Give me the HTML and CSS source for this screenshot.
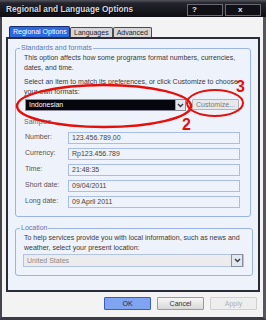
FILE: index.html
```html
<!DOCTYPE html>
<html lang="en">
<head>
    <meta charset="UTF-8">
    <meta name="viewport" content="width=device-width, initial-scale=1.0">
    <title>Regional and Language Options</title>
    <link rel="stylesheet" href="styles.css">
</head>
<body>

    <div class="window">
        <div class="titlebar">
            <span class="title">Regional and Language Options</span>
            <span class="tb-btn help">?</span>
            <span class="tb-btn close">x</span>
        </div>

        <div class="frame">
            <div class="tabs">
                <span class="tab active">Regional Options</span>
                <span class="tab">Languages</span>
                <span class="tab">Advanced</span>
            </div>

            <div class="panel">
                <fieldset class="group standards">
                    <legend>Standards and formats</legend>
                    <p>This option affects how some programs format numbers, currencies,<br>dates, and time.</p>
                    <p class="gap">Select an item to match its preferences, or click Customize to choose<br>your own formats:</p>

                    <div class="select-row">
                        <div class="combo dark">
                            <span class="combo-text">Indonesian</span>
                            <span class="combo-arrow">
                                <svg width="7" height="5" viewBox="0 0 7 5"><path d="M1 1 L3.5 3.5 L6 1" fill="none" stroke="#333" stroke-width="1.3"/></svg>
                            </span>
                        </div>
                        <span class="btn customize">Customize...</span>
                    </div>

                    <div class="samples-title">Samples</div>
                    <div class="samples">
                        <span class="label">Number:</span><span class="field">123.456.789,00</span>
                        <span class="label">Currency:</span><span class="field">Rp123.456.789</span>
                        <span class="label">Time:</span><span class="field">21:48:35</span>
                        <span class="label">Short date:</span><span class="field">09/04/2011</span>
                        <span class="label">Long date:</span><span class="field">09 April 2011</span>
                    </div>
                </fieldset>

                <fieldset class="group location">
                    <legend>Location</legend>
                    <p>To help services provide you with local information, such as news and<br>weather, select your present location:</p>
                    <div class="combo light">
                        <span class="combo-text">United States</span>
                        <span class="combo-arrow">
                            <svg width="7" height="5" viewBox="0 0 7 5"><path d="M1 1 L3.5 3.5 L6 1" fill="none" stroke="#333" stroke-width="1.3"/></svg>
                        </span>
                    </div>
                </fieldset>
            </div>

            <div class="actions">
                <span class="btn ok">OK</span>
                <span class="btn">Cancel</span>
                <span class="btn disabled">Apply</span>
            </div>
        </div>

        <!-- hand drawn marks over the screenshot -->
        <svg class="marks" width="266" height="320" viewBox="0 0 266 320">
            <ellipse cx="104" cy="106" rx="87" ry="21" fill="none" stroke="#e4100c" stroke-width="2.5"/>
            <ellipse cx="215" cy="103" rx="28" ry="13" fill="none" stroke="#e4100c" stroke-width="2"/>
            <text x="236" y="92" class="mark-num">3</text>
            <text x="182" y="130" class="mark-num">2</text>
        </svg>
    </div>

</body>
</html>
```

FILE: styles.css
```css
body {
    margin: 0;
    font-family: "Liberation Sans", Arial, sans-serif;
    font-size: 7px;
    color: #3a3a3a;
}
.window {
    position: relative;
    width: 266px;
    height: 320px;
    background-color: #f3f3f3;
    overflow: hidden;
}
.titlebar {
    height: 17px;
    display: flex;
    align-items: center;
    padding: 0 5px 0 6px;
    box-sizing: border-box;
    background: linear-gradient(#55555f 0, #24242c 3px, #0e0e14 100%);
}
.title {
    flex: 1;
    font-size: 8.3px;
    font-weight: bold;
    color: #d6d6de;
    text-shadow: 1px 1px 0 #000;
    white-space: nowrap;
}
.tb-btn {
    width: 36px;
    height: 12px;
    margin-left: 2px;
    margin-top: 3px;
    box-sizing: border-box;
    border: 1px solid #6a6a74;
    background: #101016;
    color: #e8e8e8;
    font-weight: bold;
    font-size: 8px;
    line-height: 10px;
}
.tb-btn.help {
    padding-left: 4px;
}
.tb-btn.close {
    padding-left: 12px;
}
.frame {
    height: 303px;
    box-sizing: border-box;
    border-left: 2px solid #44444c;
    border-right: 3px solid #55555d;
    border-bottom: 3px solid #3a3a42;
    padding: 9px 3px 0 4px;
}
.tabs {
    display: flex;
    align-items: flex-end;
    height: 11px;
    margin-left: 3px;
}
.tab {
    height: 10px;
    box-sizing: border-box;
    padding: 0 3px;
    border: 1px solid #4a4a52;
    border-bottom: none;
    border-radius: 2px 2px 0 0;
    background: #d6d6da;
    color: #1e1e24;
    font-size: 7px;
    line-height: 9px;
    white-space: nowrap;
}
.tab.active {
    height: 11px;
    width: 61px;
    background: #2c68de;
    border-color: #162c70;
    color: #fff;
    line-height: 10px;
}
.panel {
    height: 255px;
    box-sizing: border-box;
    border: 2px solid #2c2c38;
    background-color: #eef2fa;
    padding-top: 1px;
}
.group {
    margin: 3px 7px 0 7px;
    padding: 0 8px 8px 8px;
    border: 1px solid #9ab4e6;
    border-radius: 3px;
}
.group legend {
    padding: 0 1px;
    margin-left: -4px;
    color: #5a78b8;
    line-height: 10px;
}
.group p {
    margin: 0;
    line-height: 10px;
    white-space: nowrap;
}
.group p.gap {
    margin-top: 4px;
}
.select-row {
    display: flex;
    gap: 6px;
    margin-top: 2px;
    margin-left: 1px;
}
.combo {
    display: flex;
    align-items: center;
    height: 12px;
    box-sizing: border-box;
    border: 1px solid #8c8c9c;
}
.combo.dark {
    width: 161px;
    background: #06060e;
    color: #fff;
}
.combo-text {
    flex: 1;
    padding-left: 3px;
    line-height: 10px;
}
.combo-arrow {
    display: flex;
    align-items: center;
    justify-content: center;
    width: 9px;
    height: 10px;
    background: #e2e6ee;
    border-left: 1px solid #9aa0b0;
}
.combo.light {
    width: 221px;
    height: 13px;
    margin-top: 1px;
    margin-left: -1px;
    background: #ececee;
    border-color: #b4c4e0;
    color: #8a8a8a;
}
.combo.light .combo-arrow {
    height: 11px;
    width: 10px;
    border: 1px solid #8a90a0;
}
.btn {
    display: inline-block;
    width: 47px;
    height: 13px;
    box-sizing: border-box;
    border: 1px solid #9a9aa4;
    border-radius: 1px;
    background: linear-gradient(#f6f6f6, #d8d8d8);
    color: #333;
    text-align: center;
    line-height: 11px;
}
.btn.customize {
    height: 11px;
    line-height: 9px;
    color: #7a7a7a;
    border-color: #b4b4bc;
    background: #e8e8ea;
}
.samples-title {
    margin-top: 6px;
    line-height: 10px;
    color: #6a6a6a;
}
.samples {
    display: grid;
    grid-template-columns: 43px 172px;
    row-gap: 4px;
    margin-top: 5px;
    margin-left: 1px;
}
.label {
    color: #555;
    line-height: 10px;
}
.field {
    height: 12px;
    box-sizing: border-box;
    border: 1px solid #a8bee8;
    background-color: #eef2fa;
    padding-left: 3px;
    line-height: 10px;
    color: #444;
}
.location {
    margin-top: 6px;
    padding-top: 5px;
}
.location legend {
    margin-bottom: -5px;
}
.actions {
    display: flex;
    justify-content: flex-end;
    gap: 6px;
    margin-top: 5px;
    padding-right: 3px;
}
.btn.ok {
    background: #7ea4f2;
    border-color: #3a5cbc;
    color: #1a2a50;
}
.btn.disabled {
    color: #b0b0b0;
    border-color: #cfcfd4;
    background: #eeeeee;
}
.marks {
    position: absolute;
    top: 0;
    left: 0;
    pointer-events: none;
}
.mark-num {
    font-family: "Liberation Sans", Arial, sans-serif;
    font-size: 16px;
    font-weight: bold;
    fill: #e4100c;
}
```
